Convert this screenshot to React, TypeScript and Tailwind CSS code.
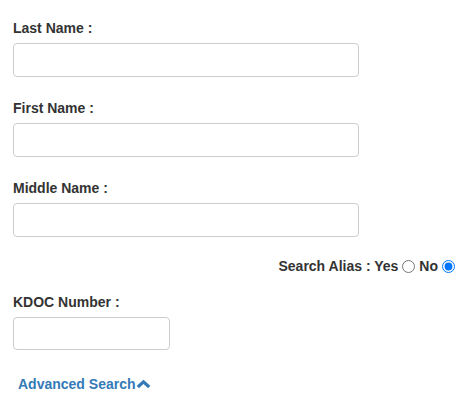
import React from 'react'

const font = { fontFamily: '"Liberation Sans", Arial, sans-serif' }

function Field({ label, wide = true }: { label: string; wide?: boolean }) {
  return (
    <div className="mb-[21px]">
      <label className="block text-[14px] leading-[20px] font-bold text-[#333] mb-[5px]">{label}</label>
      <input
        type="text"
        className={`${wide ? 'w-[346px]' : 'w-[157px]'} h-[34px] block rounded-[4px] border border-[#ccc] bg-white px-3 text-[14px] outline-none`}
      />
    </div>
  )
}

export default function App() {
  return (
    <div className="min-h-screen bg-white pl-[13px] pt-[18px]" style={font}>
      <Field label="Last Name :" />
      <Field label="First Name :" />
      <div className="mb-[19px]">
        <label className="block text-[14px] leading-[20px] font-bold text-[#333] mb-[5px]">Middle Name :</label>
        <input type="text" className="w-[346px] h-[34px] block rounded-[4px] border border-[#ccc] bg-white px-3 outline-none" />
      </div>

      {/* alias toggle */}
      <div className="flex items-center justify-end pr-[7px] h-[20px] text-[14px] font-bold text-[#333] mb-[16px]">
        <span>Search Alias : Yes</span>
        <input type="radio" name="alias" className="w-[13px] h-[13px] ml-[4px] mr-[4px] mt-[1px]" />
        <span>No</span>
        <input type="radio" name="alias" defaultChecked className="w-[13px] h-[13px] ml-[4px] mt-[1px]" />
      </div>

      <div className="mb-[22px]">
        <label className="block text-[14px] leading-[20px] font-bold text-[#333] mb-[5px]">KDOC Number :</label>
        <input type="text" className="w-[157px] h-[33px] block rounded-[4px] border border-[#ccc] bg-white px-3 outline-none" />
      </div>

      <a href="#" className="ml-[5px] inline-flex items-center text-[14px] leading-[20px] font-bold text-[#337ab7]">
        Advanced Search
        <svg width="15" height="10" viewBox="0 0 15 10">
          <polyline points="1.8,8 7.5,2.8 13.2,8" fill="none" stroke="#337ab7" strokeWidth="3.2" />
        </svg>
      </a>
    </div>
  )
}
